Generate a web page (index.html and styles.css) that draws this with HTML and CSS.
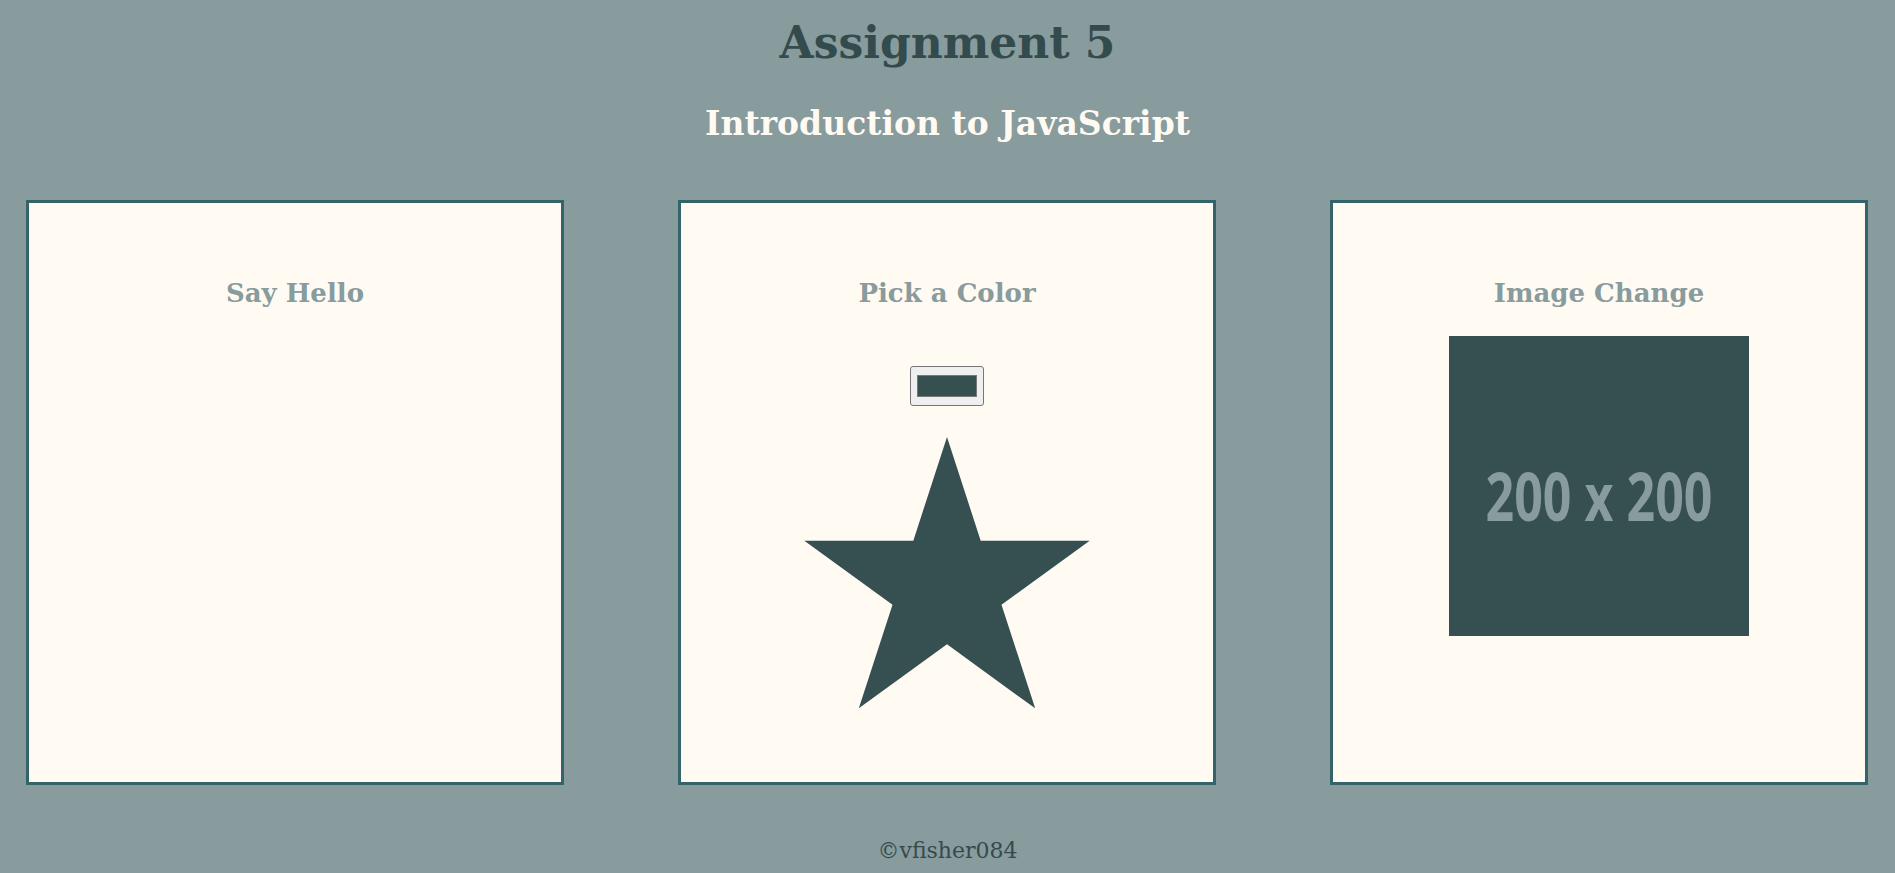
FILE: index.html
```html
<!DOCTYPE html>
<html lang="en">
<head>
<meta charset="utf-8">
<title>Assignment 5</title>
<link rel="stylesheet" href="styles.css">
</head>
<body>
<header class="page-header">
  <h1 class="title">Assignment 5</h1>
  <h2 class="subtitle">Introduction to JavaScript</h2>
</header>
<main class="cards">
  <section class="card">
    <h3 class="card-title">Say Hello</h3>
  </section>
  <section class="card">
    <h3 class="card-title">Pick a Color</h3>
    <input class="picker" type="color" value="#364f50" aria-label="Pick a color">
    <svg class="star" width="300" height="272" viewBox="0 0 300 272" aria-hidden="true">
      <polygon points="150,0 183.68,103.65 292.66,103.65 204.49,167.7 238.17,271.35 150,207.29 61.83,271.35 95.51,167.7 7.34,103.65 116.32,103.65"/>
    </svg>
  </section>
  <section class="card">
    <h3 class="card-title">Image Change</h3>
    <div class="placeholder">
      <svg class="placeholder-label" width="300" height="300" viewBox="0 0 300 300">
        <text x="150" y="138" transform="scale(1 1.34)" text-anchor="middle" textLength="227" lengthAdjust="spacingAndGlyphs">200 x 200</text>
      </svg>
    </div>
  </section>
</main>
<footer class="footer">©vfisher084</footer>
</body>
</html>
```
FILE: styles.css
```css
html {
  background: #889b9d;
}
body {
  margin: 0;
  background: #889b9d;
  font-family: "DejaVu Serif", "Liberation Serif", serif;
}
.page-header {
  text-align: center;
}
.title {
  margin: 21px 0 0;
  font-size: 44px;
  line-height: 44px;
  font-weight: bold;
  color: #344b4e;
}
.subtitle {
  margin: 42px 0 0;
  font-size: 33px;
  line-height: 33px;
  font-weight: bold;
  color: #fffaf2;
}
.cards {
  display: flex;
  justify-content: space-between;
  margin-top: 60px;
  padding: 0 27px 0 26px;
}
.card {
  box-sizing: border-box;
  width: 538px;
  height: 585px;
  border: 3px solid #35636a;
  background: #fffaf2;
  padding-top: 77px;
  display: flex;
  flex-direction: column;
  align-items: center;
}
.card-title {
  margin: 0;
  font-size: 26px;
  line-height: 26px;
  font-weight: bold;
  color: #889b9d;
}
.picker {
  box-sizing: border-box;
  margin: 60px 0 0;
  width: 74px;
  height: 40px;
  padding: 0;
  border: 1px solid #767676;
  border-radius: 3px;
  background: #efefef;
  cursor: pointer;
}
.picker::-webkit-color-swatch-wrapper {
  padding: 8px 6px;
}
.picker::-webkit-color-swatch {
  border: 1px solid #777777;
  border-radius: 0;
}
.star {
  display: block;
  margin-top: 31px;
  fill: #364f50;
}
.placeholder {
  margin-top: 30px;
  width: 300px;
  height: 300px;
  background: #364f50;
}
.placeholder-label {
  display: block;
}
.placeholder-label text {
  font-family: "Open Sans", "Noto Sans", sans-serif;
  font-weight: 700;
  font-size: 50px;
  fill: #889b9d;
}
.footer {
  margin-top: 55px;
  text-align: center;
  font-size: 22px;
  line-height: 22px;
  color: #344b4e;
}
```
